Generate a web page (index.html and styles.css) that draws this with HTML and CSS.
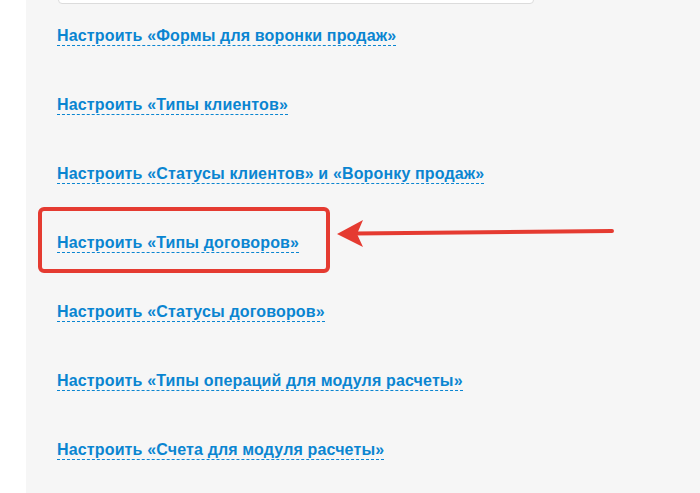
FILE: index.html
```html
<!DOCTYPE html>
<html lang="ru">
<head>
    <meta charset="UTF-8">
    <title>Настройки</title>
    <link rel="stylesheet" href="styles.css">
</head>
<body>
    <div class="panel">
        <div class="top-box"></div>
        <ul class="settings">
            <li><a href="#">Настроить «Формы для воронки продаж»</a></li>
            <li><a href="#">Настроить «Типы клиентов»</a></li>
            <li><a href="#">Настроить «Статусы клиентов» и «Воронку продаж»</a></li>
            <li class="marked"><a href="#">Настроить «Типы договоров»</a></li>
            <li><a href="#">Настроить «Статусы договоров»</a></li>
            <li><a href="#">Настроить «Типы операций для модуля расчеты»</a></li>
            <li><a href="#">Настроить «Счета для модуля расчеты»</a></li>
        </ul>
        <svg class="arrow" width="700" height="493" viewBox="0 0 700 493">
            <line x1="612" y1="231" x2="355" y2="233.5" stroke="#e53b31" stroke-width="4" stroke-linecap="round"/>
            <polygon points="337,234 363,220 357,234 363,247" fill="#e53b31"/>
        </svg>
    </div>
</body>
</html>
```

FILE: styles.css
```css
body { margin: 0; background: #fff; font-family: "Liberation Sans", Arial, sans-serif; overflow: hidden; }
.panel { margin-left: 26px; height: 493px; background: #f6f6f6; position: relative; overflow: hidden; }
.top-box { width: 474px; height: 20px; margin: -18px 0 0 32px; background: #fff; border: 1px solid #dcdcdc; border-radius: 0 0 4px 4px; }

.settings { list-style: none; margin: -2px 0 0 0; padding: 0 0 0 31px; }
.settings li { height: 69px; display: flex; align-items: center; position: relative; }
.settings a { font-size: 16px; font-weight: bold; letter-spacing: 0.15px; color: #0a85d1; text-decoration: none; border-bottom: 1px dashed #0a85d1; line-height: 18px; }

/* red frame over the item */
.settings li.marked::before { content: ""; position: absolute; left: -19px; top: -2px; width: 284px; height: 58px; border: 4px solid #e53b31; border-radius: 6px; }

.arrow { position: absolute; left: -26px; top: 0; pointer-events: none; }
```
